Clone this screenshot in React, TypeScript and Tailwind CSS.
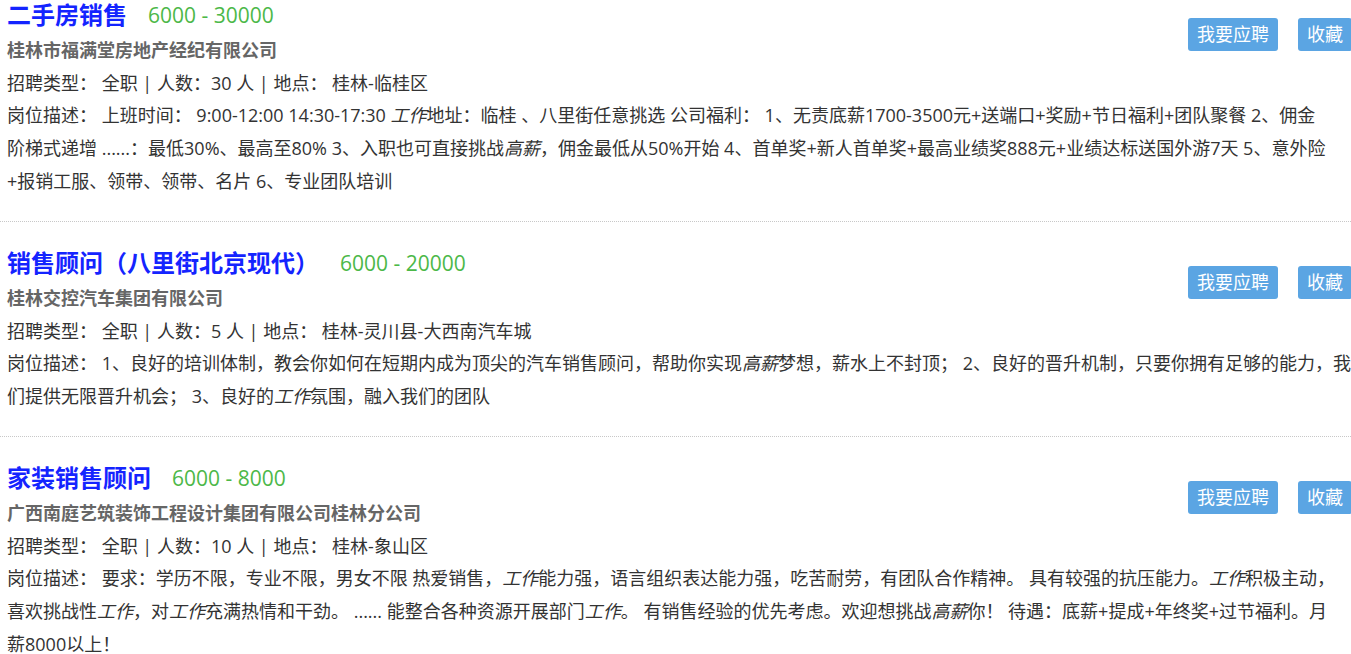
type Part = string | { em: string }

type Job = {
  title: string
  salary: string
  company: string
  count: number
  place: string
  lines: Part[][]
}

const jobs: Job[] = [
  {
    title: '二手房销售',
    salary: '6000 - 30000',
    company: '桂林市福满堂房地产经纪有限公司',
    count: 30,
    place: '桂林-临桂区',
    lines: [
      [
        '岗位描述： 上班时间： 9:00-12:00 14:30-17:30 ',
        { em: '工作' },
        '地址：临桂 、八里街任意挑选 公司福利： 1、无责底薪1700-3500元+送端口+奖励+节日福利+团队聚餐 2、佣金',
      ],
      [
        '阶梯式递增 ......：最低30%、最高至80% 3、入职也可直接挑战',
        { em: '高薪' },
        '，佣金最低从50%开始 4、首单奖+新人首单奖+最高业绩奖888元+业绩达标送国外游7天 5、意外险',
      ],
      ['+报销工服、领带、领带、名片 6、专业团队培训'],
    ],
  },
  {
    title: '销售顾问（八里街北京现代）',
    salary: '6000 - 20000',
    company: '桂林交控汽车集团有限公司',
    count: 5,
    place: '桂林-灵川县-大西南汽车城',
    lines: [
      [
        '岗位描述： 1、良好的培训体制，教会你如何在短期内成为顶尖的汽车销售顾问，帮助你实现',
        { em: '高薪' },
        '梦想，薪水上不封顶； 2、良好的晋升机制，只要你拥有足够的能力，我',
      ],
      ['们提供无限晋升机会； 3、良好的', { em: '工作' }, '氛围，融入我们的团队'],
    ],
  },
  {
    title: '家装销售顾问',
    salary: '6000 - 8000',
    company: '广西南庭艺筑装饰工程设计集团有限公司桂林分公司',
    count: 10,
    place: '桂林-象山区',
    lines: [
      [
        '岗位描述： 要求：学历不限，专业不限，男女不限 热爱销售，',
        { em: '工作' },
        '能力强，语言组织表达能力强，吃苦耐劳，有团队合作精神。 具有较强的抗压能力。',
        { em: '工作' },
        '积极主动，',
      ],
      [
        '喜欢挑战性',
        { em: '工作' },
        '，对',
        { em: '工作' },
        '充满热情和干劲。 ...... 能整合各种资源开展部门',
        { em: '工作' },
        '。 有销售经验的优先考虑。欢迎想挑战',
        { em: '高薪' },
        '你！ 待遇：底薪+提成+年终奖+过节福利。月',
      ],
      ['薪8000以上！'],
    ],
  },
]

function JobItem({ job }: { job: Job }) {
  return (
    <li className="border-b border-dotted border-[#c8c8c8] pt-[26px] pb-[23px] pl-[7px] first:pt-0">
      <div className="float-right mt-[18px] -mr-px flex gap-5">
        <button className="h-[33px] rounded-[3px] bg-[#5ba5e3] px-[9px] text-[18px] text-white">
          我要应聘
        </button>
        <button className="h-[33px] rounded-[3px] bg-[#5ba5e3] px-[9px] text-[18px] text-white">
          收藏
        </button>
      </div>
      <div className="flex items-center gap-[21px] leading-[30px]">
        <h2 className="text-[24px] font-bold text-[#1424ff]">{job.title}</h2>
        <span className="text-[21px] text-[#4cb848]">{job.salary}</span>
      </div>
      <p className="mt-[3px] font-bold leading-[34px] text-[#666]">{job.company}</p>
      <p className="leading-[32px]">
        招聘类型： 全职 | 人数：{job.count} 人 | 地点： {job.place}
      </p>
      <div className="leading-[33px]">
        {job.lines.map((line, n) => (
          <p key={n} className="whitespace-nowrap">
            {line.map((part, i) =>
              typeof part === 'string' ? part : <em key={i}>{part.em}</em>
            )}
          </p>
        ))}
      </div>
    </li>
  )
}

function App() {
  return (
    <main
      className="min-h-screen w-full overflow-hidden bg-white text-[18px] text-[#333]"
      style={{ fontFamily: '"Open Sans", "Noto Sans CJK SC", sans-serif' }}
    >
      <ul>
        {jobs.map((job) => (
          <JobItem key={job.title} job={job} />
        ))}
      </ul>
    </main>
  )
}

export default App
